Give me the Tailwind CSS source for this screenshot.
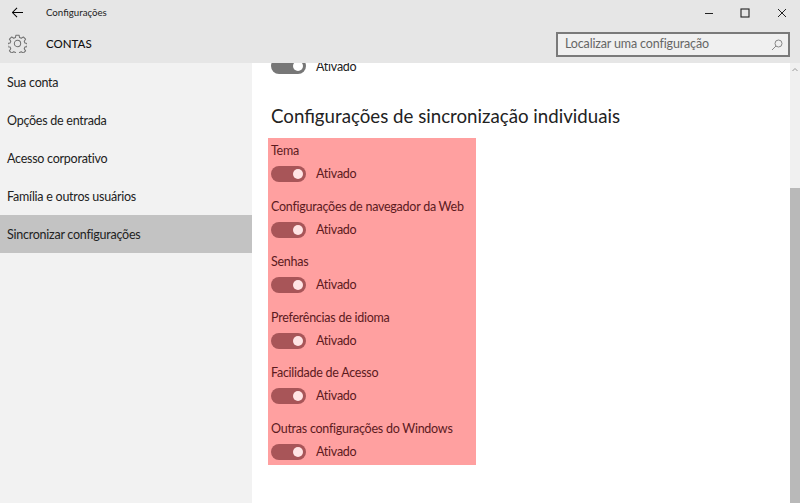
<!DOCTYPE html>
<html lang="pt-BR">

<head>
  <meta charset="UTF-8" />
  <title>Configurações</title>
  <script src="https://cdn.jsdelivr.net/npm/@tailwindcss/browser@4"></script>
</head>

<body class="w-[800px] h-[503px] overflow-hidden bg-white font-['Lato',sans-serif] text-[#1a1a1a]">
  <header class="h-[63px] bg-[#e6e6e6]">
    <div class="h-[25px] flex items-center">
      <svg class="ml-[12px] w-[11px] h-[11px] text-black" viewBox="0 0 12 12" fill="none" stroke="currentColor" stroke-width="1.1">
        <path d="M0.5 6H12M5.5 1L0.5 6l5 5" />
      </svg>
      <span class="ml-[23px] text-[9.7px] text-[#222]">Configurações</span>
      <div class="ml-auto flex items-center">
        <svg class="w-[10px] h-[10px] mr-[26px]" viewBox="0 0 10 10" stroke="#222" fill="none"><path d="M1 5.500H9" /></svg>
        <svg class="w-[10px] h-[10px] mr-[27px]" viewBox="0 0 10 10" stroke="#222" fill="none" stroke-width="1.100"><rect x="1" y="1" width="8" height="8" /></svg>
        <svg class="w-[10px] h-[10px] mr-[13px]" viewBox="0 0 10 10" stroke="#222" fill="none"><path d="M1 1L9 9M9 1L1 9" /></svg>
      </div>
    </div>
    <div class="h-[38px] flex items-center">
      <svg class="ml-[8px] mb-[2px] w-[19px] h-[19px] text-[#707070]" viewBox="0 0 24 24" fill="none" stroke="currentColor" stroke-width="1.300" stroke-linejoin="round">
        <path d="M10 1.500h4l.6 3 2.200.9 2.600-1.700 2.800 2.900-1.700 2.500.9 2.300 3 .6-.1 3.900-2.900.6-.9 2.200 1.700 2.600-2.900 2.800-2.500-1.700-2.200.9-.6 3h-4l-.6-3-2.200-.9-2.600 1.700-2.800-2.900 1.700-2.500-.9-2.200-3-.6v-4l3-.6.9-2.200-1.700-2.600 2.900-2.800 2.500 1.700 2.200-.9z" />
        <circle cx="12" cy="12" r="4" />
      </svg>
      <span class="ml-[19px] text-[11.5px] font-medium text-[#111]">CONTAS</span>
      <div class="ml-auto mr-[10px] mt-[1px] w-[234px] h-[25px] bg-[#f0f0f0] border-2 border-[#7a7a7a] flex items-center pl-[7px] pr-[5px]">
        <span class="text-[12.5px] tracking-[-0.15px] text-[#666]">Localizar uma configuração</span>
        <svg class="ml-auto w-[12px] h-[12px] text-[#888]" viewBox="0 0 12 12" fill="none" stroke="currentColor">
          <circle cx="7.500" cy="4.500" r="3.500" />
          <path d="M5 7L1 11" />
        </svg>
      </div>
    </div>
  </header>

  <div class="flex h-[440px]">
    <nav class="w-[252px] bg-[#f2f2f2] text-[12.5px] tracking-[-0.25px] text-[#222]">
      <a class="h-[38px] pl-[7px] pt-[2px] flex items-center">Sua conta</a>
      <a class="h-[38px] pl-[7px] pt-[2px] flex items-center">Opções de entrada</a>
      <a class="h-[38px] pl-[7px] pt-[2px] flex items-center">Acesso corporativo</a>
      <a class="h-[38px] pl-[7px] pt-[2px] flex items-center">Família e outros usuários</a>
      <a class="h-[38px] pl-[7px] pt-[2px] flex items-center bg-[#c3c3c3]">Sincronizar configurações</a>
    </nav>

    <main class="flex-1 overflow-hidden">
      <div class="-mt-[5px] ml-[19px] h-[16px] flex items-center gap-[10px] text-[12.5px] tracking-[-0.25px] text-[#222]">
        <span class="w-[35px] h-[16px] rounded-full bg-[#777] flex items-center justify-end pr-[3px]"><span class="w-[10px] h-[10px] rounded-full bg-white"></span></span>
        <span class="pt-[2px]">Ativado</span>
      </div>

      <h2 class="ml-[19px] mt-[27px] h-[30px] leading-[30px] text-[18.7px] text-[#222]">Configurações de sincronização individuais</h2>

      <section class="ml-[16px] mt-[7px] w-[208px] h-[327px] bg-[#ffa0a0] pl-[3px] text-[12.5px] tracking-[-0.25px] text-[#5c1a1e]">
        <div class="h-[55.5px] pt-[3px]">
          <p class="h-[20px] leading-[20px]">Tema</p>
          <div class="mt-[5px] h-[16px] flex items-center gap-[10px]"><span class="w-[35px] h-[16px] rounded-full bg-[#a85558] flex items-center justify-end pr-[3px]"><span class="w-[10px] h-[10px] rounded-full bg-[#ffe4e4]"></span></span><span class="pt-[1px]">Ativado</span></div>
        </div>
        <div class="h-[55.5px] pt-[3px]">
          <p class="h-[20px] leading-[20px]">Configurações de navegador da Web</p>
          <div class="mt-[5px] h-[16px] flex items-center gap-[10px]"><span class="w-[35px] h-[16px] rounded-full bg-[#a85558] flex items-center justify-end pr-[3px]"><span class="w-[10px] h-[10px] rounded-full bg-[#ffe4e4]"></span></span><span class="pt-[1px]">Ativado</span></div>
        </div>
        <div class="h-[55.5px] pt-[3px]">
          <p class="h-[20px] leading-[20px]">Senhas</p>
          <div class="mt-[5px] h-[16px] flex items-center gap-[10px]"><span class="w-[35px] h-[16px] rounded-full bg-[#a85558] flex items-center justify-end pr-[3px]"><span class="w-[10px] h-[10px] rounded-full bg-[#ffe4e4]"></span></span><span class="pt-[1px]">Ativado</span></div>
        </div>
        <div class="h-[55.5px] pt-[3px]">
          <p class="h-[20px] leading-[20px]">Preferências de idioma</p>
          <div class="mt-[5px] h-[16px] flex items-center gap-[10px]"><span class="w-[35px] h-[16px] rounded-full bg-[#a85558] flex items-center justify-end pr-[3px]"><span class="w-[10px] h-[10px] rounded-full bg-[#ffe4e4]"></span></span><span class="pt-[1px]">Ativado</span></div>
        </div>
        <div class="h-[55.5px] pt-[3px]">
          <p class="h-[20px] leading-[20px]">Facilidade de Acesso</p>
          <div class="mt-[5px] h-[16px] flex items-center gap-[10px]"><span class="w-[35px] h-[16px] rounded-full bg-[#a85558] flex items-center justify-end pr-[3px]"><span class="w-[10px] h-[10px] rounded-full bg-[#ffe4e4]"></span></span><span class="pt-[1px]">Ativado</span></div>
        </div>
        <div class="h-[50px] pt-[3px]">
          <p class="h-[20px] leading-[20px]">Outras configurações do Windows</p>
          <div class="mt-[5px] h-[16px] flex items-center gap-[10px]"><span class="w-[35px] h-[16px] rounded-full bg-[#a85558] flex items-center justify-end pr-[3px]"><span class="w-[10px] h-[10px] rounded-full bg-[#ffe4e4]"></span></span><span class="pt-[1px]">Ativado</span></div>
        </div>
      </section>
    </main>

    <aside class="w-[10px] bg-[#f0f0f0] flex flex-col">
      <svg class="mt-[4px] w-[10px] h-[6px] text-[#999]" viewBox="0 0 10 6" fill="none" stroke="currentColor"><path d="M2.500 4L5 1.500 7.500 4" /></svg>
      <div class="mt-[115px] flex-1 bg-[#b9b9b9]"></div>
    </aside>
  </div>
</body>

</html>
